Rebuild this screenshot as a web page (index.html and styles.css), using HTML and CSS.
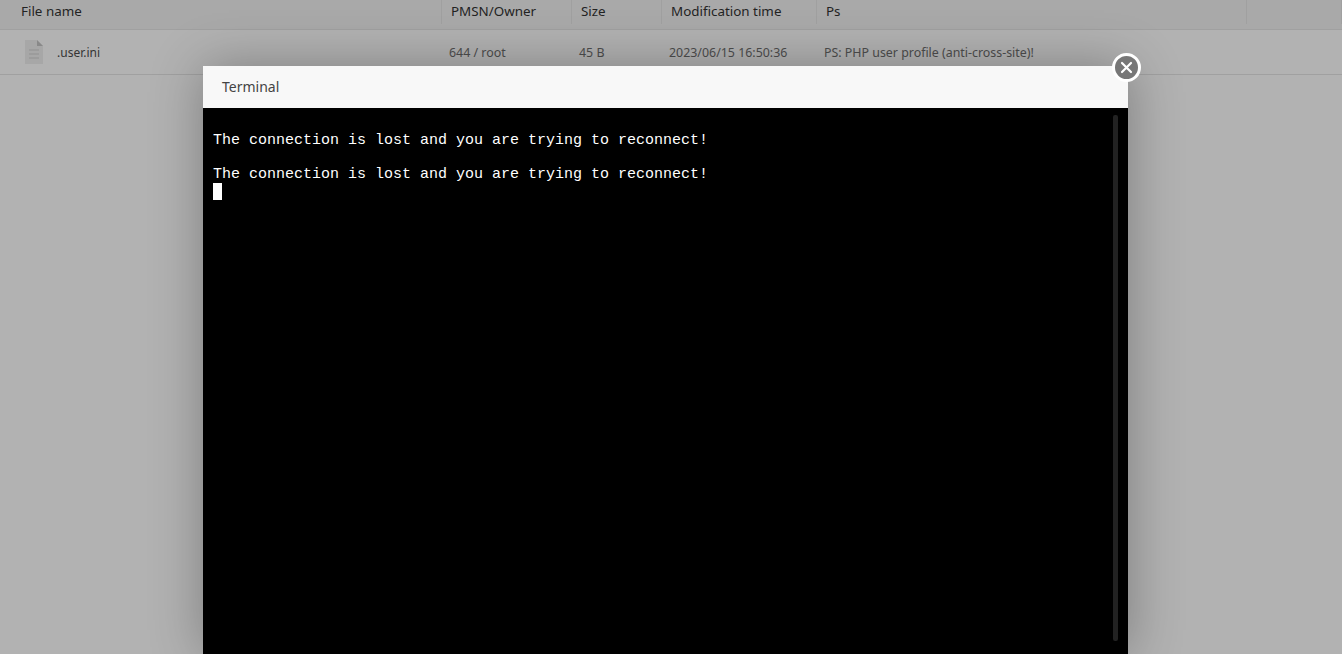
FILE: index.html
```html
<!DOCTYPE html>
<html lang="en">
<head>
<meta charset="utf-8">
<title>Terminal</title>
<link rel="stylesheet" href="styles.css">
</head>
<body>
<main class="files">
  <div class="thead">
    <div class="th first"><span>File name</span></div>
    <div class="th"><span>PMSN/Owner</span></div>
    <div class="th"><span>Size</span></div>
    <div class="th"><span>Modification time</span></div>
    <div class="th"><span>Ps</span></div>
    <div class="th"></div>
  </div>
  <div class="row">
    <div class="td name">
      <svg class="file-icon" width="20" height="26" viewBox="0 0 20 26">
        <path d="M1 1h12l6 6v18H1z" fill="#efefef"/>
        <path d="M13 1l6 6h-6z" fill="#c4c4c4"/>
        <path d="M5 11h10M5 15h10M5 19h10" stroke="#dcdcdc" stroke-width="1.5"/>
      </svg>
      <span class="fname">.user.ini</span>
    </div>
    <div class="td">644 / root</div>
    <div class="td">45 B</div>
    <div class="td">2023/06/15 16:50:36</div>
    <div class="td">PS: PHP user profile (anti-cross-site)!</div>
    <div class="td"></div>
  </div>
</main>
<div class="shade"></div>
<section class="modal">
  <header class="modal-title">Terminal</header>
  <div class="terminal">
    <div class="term-line">The connection is lost and you are trying to reconnect!</div>
    <div class="term-line">&nbsp;</div>
    <div class="term-line">The connection is lost and you are trying to reconnect!</div>
    <div class="term-line"><span class="cursor">&nbsp;</span></div>
    <div class="scrollbar"></div>
  </div>
  <button class="close" aria-label="Close">
    <svg width="13" height="13" viewBox="0 0 13 13"><path d="M2 2l9 9M11 2l-9 9" stroke="#fff" stroke-width="2.2" stroke-linecap="round"/></svg>
  </button>
</section>
</body>
</html>
```
FILE: styles.css
```css
* { box-sizing: border-box; }
html, body { height: 100%; }
body {
  margin: 0;
  overflow: hidden;
  background: #fff;
  font-family: "Noto Sans", "Open Sans", sans-serif;
  color: #333;
}
.thead, .row {
  display: grid;
  grid-template-columns: 442px 130px 90px 155px 430px 95px;
}
.thead {
  height: 30px;
  background: #f3f3f3;
  border-bottom: 1px solid #e6e6e6;
  font-size: 13.4px;
  color: #333;
}
.th {
  height: 24px;
  padding: 1px 0 0 9px;
  border-right: 1px solid #e6e6e6;
  line-height: 20px;
}
.th.first { padding-left: 21px; }
.row {
  height: 45px;
  border-bottom: 1px solid #e6e6e6;
  font-size: 12.4px;
  color: #707070;
}
.td {
  display: flex;
  align-items: center;
  padding: 1px 0 0 7px;
  white-space: nowrap;
}
.td.name { padding: 0 0 0 24px; color: #4d4d4d; }
.file-icon { flex: none; }
.fname { margin-left: 13px; font-size: 12px; }
.shade {
  position: absolute;
  inset: 0;
  background: rgba(0, 0, 0, .3);
}
.modal {
  position: absolute;
  left: 203px;
  top: 66px;
  width: 925px;
  height: 588px;
  background: #000;
  box-shadow: 1px 1px 50px rgba(0, 0, 0, .3);
}
.modal-title {
  height: 42px;
  padding-left: 19px;
  background: #f8f8f8;
  font-size: 14px;
  line-height: 42px;
  color: #444;
}
.terminal {
  position: relative;
  height: 546px;
  overflow: hidden;
  padding: 24px 0 0 10px;
  background: #000;
  color: #fff;
  font-family: "Liberation Mono", monospace;
  font-size: 15px;
  line-height: 17px;
}
.term-line { height: 17px; white-space: pre; }
.cursor { display: inline-block; width: 9px; height: 17px; background: #fff; }
.scrollbar {
  position: absolute;
  left: 910px;
  top: 7px;
  width: 5px;
  height: 526px;
  border-radius: 2px;
  background: #222;
}
.close {
  position: absolute;
  right: -13px;
  top: -13px;
  width: 29px;
  height: 29px;
  padding: 0;
  display: flex;
  align-items: center;
  justify-content: center;
  border: 3px solid #fff;
  border-radius: 50%;
  background: #777;
}
```
